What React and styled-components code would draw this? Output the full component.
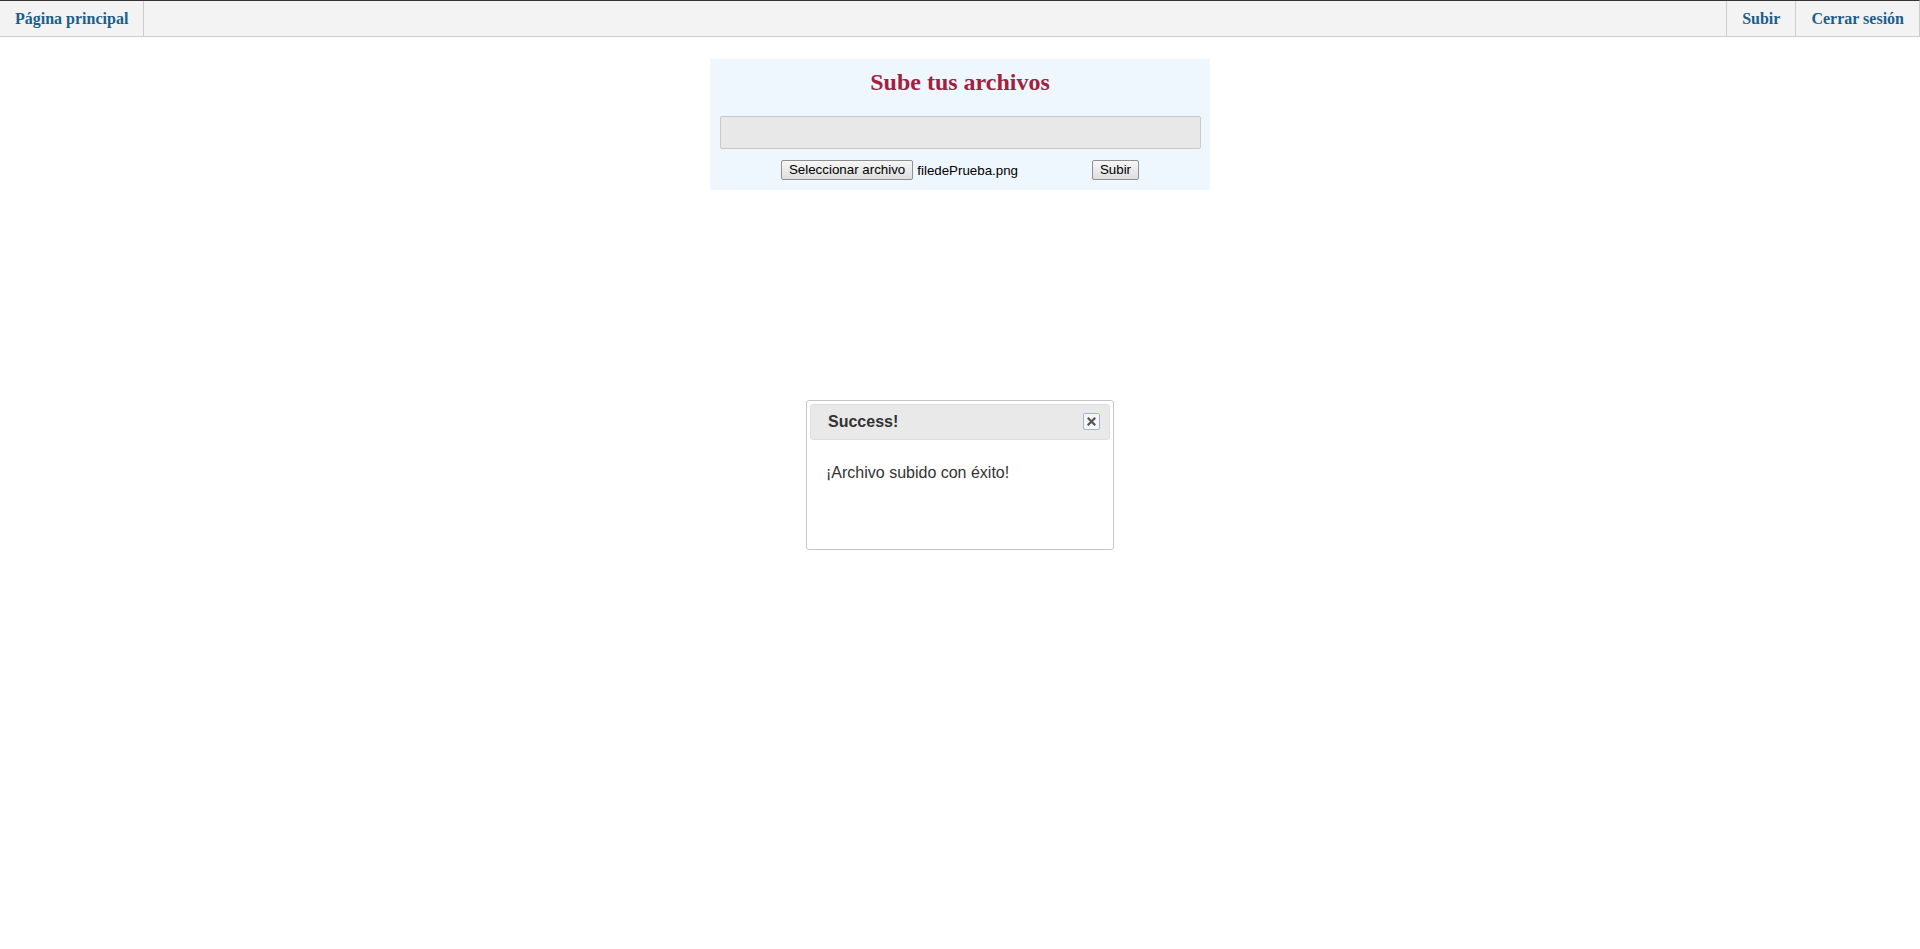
import React from "react";
import styled, { createGlobalStyle } from "styled-components";

const GlobalStyle = createGlobalStyle`
  html, body {
    margin: 0;
    padding: 0;
    background: #ffffff;
  }
  body {
    font-family: "Liberation Serif", "Times New Roman", serif;
  }
`;

const Navbar = styled.nav`
  display: flex;
  justify-content: space-between;
  height: 35px;

  background-color: #f3f3f3;
  border-top: 1px solid #333333;
  border-bottom: 1px solid #cccccc;
  border-right: 1px solid #cccccc;
`;

const NavGroup = styled.div`
  display: flex;
`;

const NavLink = styled.a`
  display: flex;
  align-items: center;
  padding: 0 15px;

  color: #1b5e8c;
  font-family: "Liberation Serif", "Times New Roman", serif;
  font-size: 16px;
  font-weight: bold;
  text-decoration: none;
  white-space: nowrap;
  cursor: pointer;
  border-left: ${(p) => (p.$divider === "left" ? "1px solid #cccccc" : "none")};
  border-right: ${(p) =>
    p.$divider === "right" ? "1px solid #cccccc" : "none"};
`;

const Main = styled.main`
  display: flex;
  justify-content: center;
  padding-top: 22px;
`;

const UploadPanel = styled.form`
  width: 500px;
  padding: 9px 10px 10px 10px;
  box-sizing: border-box;

  background-color: #eef7fe;
`;

const Title = styled.h2`
  margin: 0;
  line-height: 28px;
  text-align: center;

  color: #a3203f;
  font-family: "Liberation Serif", "Times New Roman", serif;
  font-size: 24px;
  font-weight: bold;
`;

const DropBox = styled.div`
  width: 479px;
  height: 31px;
  margin-top: 20px;

  background-color: #e8e8e8;
  border: 1px solid #c9c9c9;
  border-radius: 2px;
`;

const FileRow = styled.div`
  display: flex;
  justify-content: center;
  align-items: center;
  gap: 4px;
  margin-top: 11px;
`;

const FileInput = styled.label`
  display: flex;
  align-items: center;
  gap: 4px;
  width: 307px;
`;

const FormButton = styled.button`
  height: 20px;
  padding: 0 7px;
  box-sizing: border-box;

  color: #000000;
  font-family: "Liberation Sans", Arial, sans-serif;
  font-size: 13.33px;
  line-height: 18px;
  background: linear-gradient(#f6f6f6, #dedede);
  border: 1px solid #8f8f8f;
  border-radius: 2px;
  cursor: pointer;
`;

const FileName = styled.span`
  color: #000000;
  font-family: "Liberation Sans", Arial, sans-serif;
  font-size: 13.33px;
  white-space: nowrap;
`;

const Dialog = styled.div`
  position: fixed;
  top: 50%;
  left: 50%;
  width: 308px;
  height: 150px;
  padding: 3px;
  box-sizing: border-box;
  transform: translate(-50%, -50%);

  background: #ffffff;
  border: 1px solid #c5c5c5;
  border-radius: 3px;
  font-family: "Liberation Sans", Arial, sans-serif;
`;

const DialogHeader = styled.div`
  display: flex;
  justify-content: space-between;
  align-items: center;
  height: 34px;
  padding: 0 9px 0 17px;

  background: #e9e9e9;
  border: 1px solid #dddddd;
  border-radius: 3px;
`;

const DialogTitle = styled.span`
  color: #333333;
  font-size: 16px;
  font-weight: bold;
`;

const CloseButton = styled.button`
  display: flex;
  justify-content: center;
  align-items: center;
  width: 17px;
  height: 17px;
  margin-top: -1px;
  padding: 0;

  background: #f6f6f6;
  border: 1px solid #9fb3df;
  border-radius: 2px;
  cursor: pointer;
`;

const DialogBody = styled.div`
  padding: 8px 16px;
`;

const Message = styled.p`
  margin: 16px 0;
  color: #333333;
  font-size: 16px;
`;

const CloseIcon = () => (
  <svg width="9" height="9" viewBox="0 0 9 9">
    <path
      d="M1.5 1.5 L7.5 7.5 M7.5 1.5 L1.5 7.5"
      stroke="#555555"
      strokeWidth="2.2"
      strokeLinecap="square"
    />
  </svg>
);

const App = () => {
  return (
    <React.Fragment>
      <GlobalStyle />
      <Navbar>
        <NavGroup>
          <NavLink $divider="right">Página principal</NavLink>
        </NavGroup>
        <NavGroup>
          <NavLink $divider="left">Subir</NavLink>
          <NavLink $divider="left">Cerrar sesión</NavLink>
        </NavGroup>
      </Navbar>
      <Main>
        <UploadPanel onSubmit={(e) => e.preventDefault()}>
          <Title>Sube tus archivos</Title>
          <DropBox />
          <FileRow>
            <FileInput>
              <FormButton type="button">Seleccionar archivo</FormButton>
              <FileName>filedePrueba.png</FileName>
            </FileInput>
            <FormButton type="submit">Subir</FormButton>
          </FileRow>
        </UploadPanel>
      </Main>
      <Dialog role="dialog">
        <DialogHeader>
          <DialogTitle>Success!</DialogTitle>
          <CloseButton aria-label="close">
            <CloseIcon />
          </CloseButton>
        </DialogHeader>
        <DialogBody>
          <Message>¡Archivo subido con éxito!</Message>
        </DialogBody>
      </Dialog>
    </React.Fragment>
  );
};

export default App;
